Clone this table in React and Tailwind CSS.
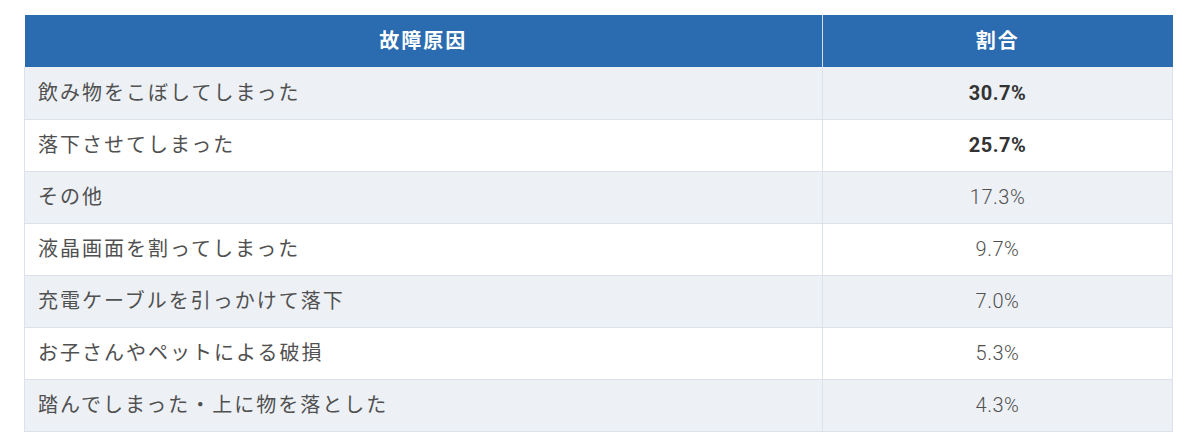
const rows = [
  { cause: '飲み物をこぼしてしまった', rate: '30.7%', bold: true },
  { cause: '落下させてしまった', rate: '25.7%', bold: true },
  { cause: 'その他', rate: '17.3%' },
  { cause: '液晶画面を割ってしまった', rate: '9.7%' },
  { cause: '充電ケーブルを引っかけて落下', rate: '7.0%' },
  { cause: 'お子さんやペットによる破損', rate: '5.3%' },
  { cause: '踏んでしまった・上に物を落とした', rate: '4.3%' },
];

export default function App() {
  return (
    <div
      className="w-[1200px] h-[446px] bg-white pt-[15px] pl-[24px]"
      style={{ fontFamily: 'Roboto, "Noto Sans CJK JP", sans-serif' }}
    >
      <table className="w-[1149px] border-collapse table-fixed text-[#505050]">
        <thead>
          <tr className="bg-[#2b6bb0] text-white h-[52px]">
            <th className="w-[798px] border-r border-[#d6dee8] text-[20px] font-bold tracking-[2px]">
              故障原因
            </th>
            <th className="text-[20px] font-bold tracking-[2px]">割合</th>
          </tr>
        </thead>
        <tbody>
          {rows.map((row, i) => (
            <tr
              key={i}
              className={
                'h-[52px] border-b border-[#dbe2ea] ' +
                (i % 2 === 0 ? 'bg-[#edf1f6]' : 'bg-white')
              }
            >
              <td className="border-l border-r border-[#dbe2ea] pl-[13px] text-[20px] tracking-[2px] font-normal">
                {row.cause}
              </td>
              <td
                className={
                  'border-r border-[#dbe2ea] text-center text-[20px] tracking-[0.5px] ' +
                  (row.bold ? 'font-bold text-[#333]' : 'font-light')
                }
              >
                {row.rate}
              </td>
            </tr>
          ))}
        </tbody>
      </table>
    </div>
  );
}
